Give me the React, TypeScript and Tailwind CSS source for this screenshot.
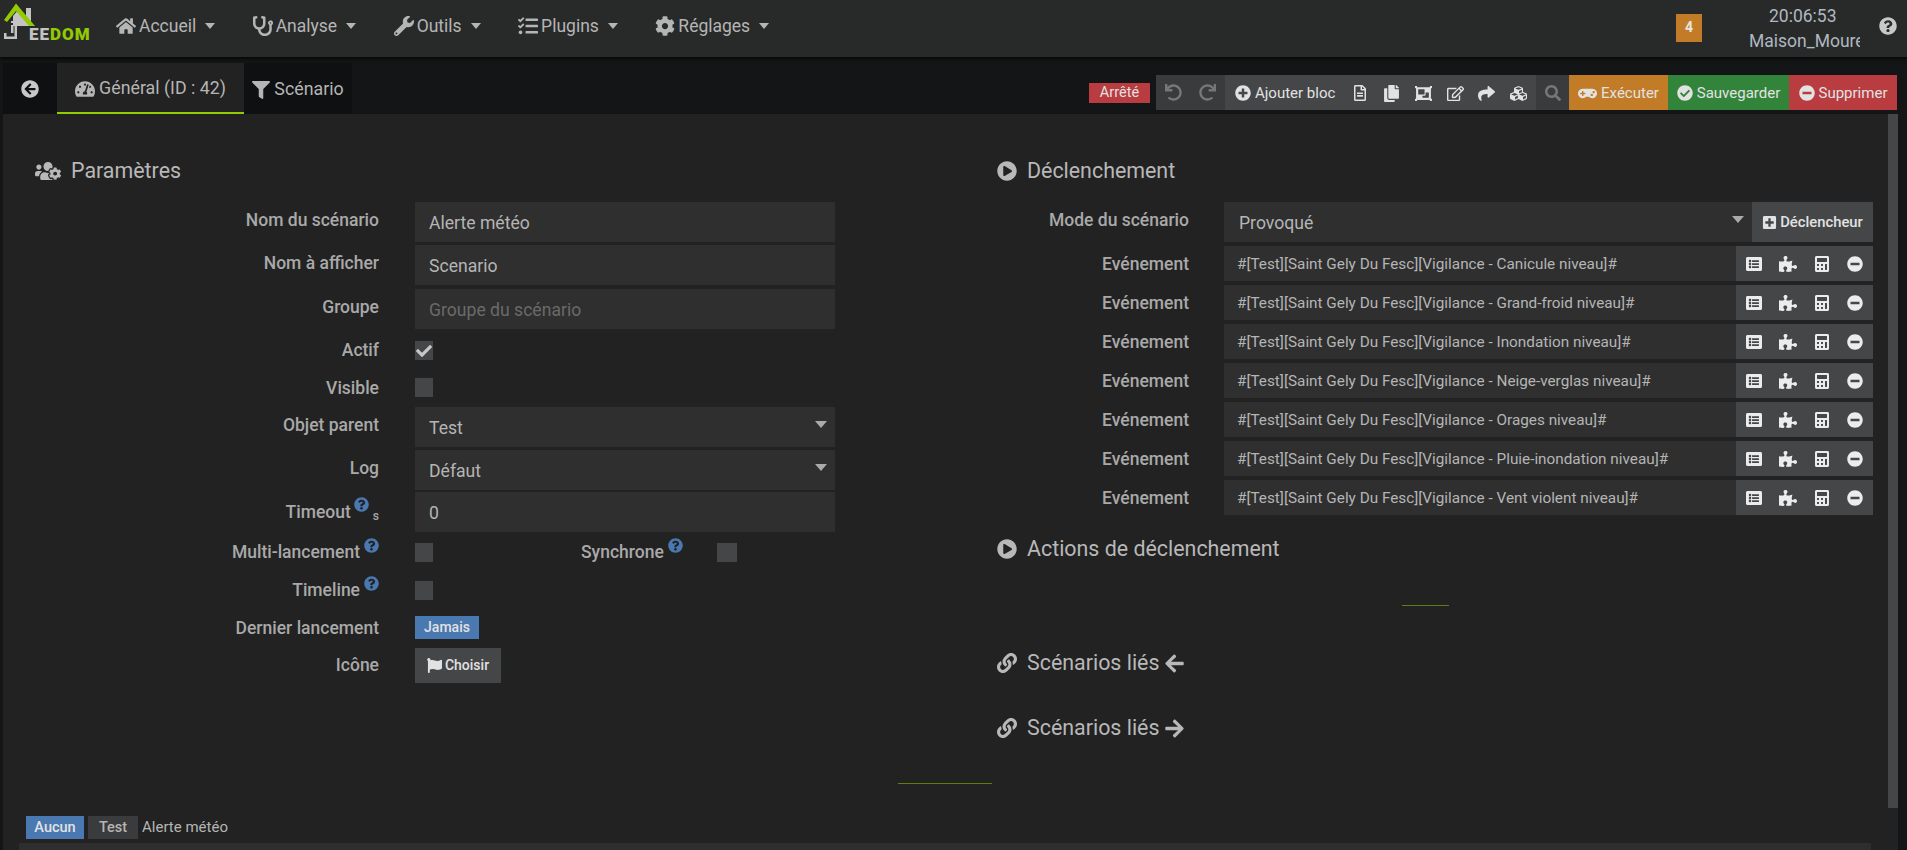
import {
  FaArrowCircleLeft, FaArrowLeft, FaArrowRight, FaCalculator, FaCheck, FaCheckCircle, FaCog, FaCubes, FaRegFileAlt,
  FaCopy, FaFilter, FaFlag, FaGamepad, FaHome, FaLink, FaListAlt, FaMinusCircle, FaObjectGroup, FaPlayCircle,
  FaPlusCircle, FaPlusSquare, FaPuzzlePiece, FaQuestionCircle, FaRedo, FaRegEdit, FaSearch, FaShare, FaStethoscope,
  FaTachometerAlt, FaTasks, FaUndo, FaUsersCog, FaWrench,
} from "react-icons/fa";

const navItems = [
  { label: "Accueil", icon: FaHome },
  { label: "Analyse", icon: FaStethoscope },
  { label: "Outils", icon: FaWrench },
  { label: "Plugins", icon: FaTasks },
  { label: "Réglages", icon: FaCog },
];

const events = [
  "#[Test][Saint Gely Du Fesc][Vigilance - Canicule niveau]#",
  "#[Test][Saint Gely Du Fesc][Vigilance - Grand-froid niveau]#",
  "#[Test][Saint Gely Du Fesc][Vigilance - Inondation niveau]#",
  "#[Test][Saint Gely Du Fesc][Vigilance - Neige-verglas niveau]#",
  "#[Test][Saint Gely Du Fesc][Vigilance - Orages niveau]#",
  "#[Test][Saint Gely Du Fesc][Vigilance - Pluie-inondation niveau]#",
  "#[Test][Saint Gely Du Fesc][Vigilance - Vent violent niveau]#",
];

function Logo() {
  return (
    <div className="relative h-[44px] w-[92px] shrink-0 self-start">
      <svg viewBox="0 0 40 42" className="absolute left-[-3px] top-0 h-[42px] w-[40px]">
        <path d="M13 16 L18 10 L26 16 L26 8 L31 8 L31 26 L13 26 Z" fill="#c4c4c4" />
        <path d="M4 20 L16 3.5 L35 26 L29 26 L16 11 L7 22 Z" fill="#93ca02" />
        <path d="M11 21 h2.5 v2 h-2.5 Z M11 25 h2.5 v8 h-2.5 Z" fill="#c4c4c4" />
        <path d="M14.5 26 h2.5 v13 h-13 v-6 h2.5 v3.5 h8 Z" fill="#c4c4c4" />
      </svg>
      <div className="absolute left-[26px] top-[24px] text-[17px] font-black leading-[20px] tracking-[1px]">
        <span className="text-[#c4c4c4]">EE</span>
        <span className="text-[#93ca02]">DOM</span>
      </div>
    </div>
  );
}

function Caret() {
  return <span className="ml-[9px] h-0 w-0 border-x-[5.5px] border-t-[6px] border-x-transparent border-t-[#b5b5b5]" />;
}

function Help({ className }: { className?: string }) {
  return <FaQuestionCircle className={`text-[15px] text-[#4a78b0] ${className ?? ""}`} />;
}

function Label({ children, up }: { children: React.ReactNode; up?: boolean }) {
  return (
    <div className={`flex w-[376px] shrink-0 items-center justify-end whitespace-nowrap text-[17.5px] font-medium text-[#a9a9a9] ${up ? "pb-[3px]" : ""}`}>
      {children}
    </div>
  );
}

function Field({ value, placeholder, select }: { value?: string; placeholder?: boolean; select?: boolean }) {
  return (
    <div className={`relative flex h-[40px] w-[420px] items-center bg-[#2f2f2f] pl-[14px] pt-[2px] text-[17.6px] ${placeholder ? "text-[#6a6a6a]" : "text-[#b5b5b5]"}`}>
      {value}
      {select && (
        <span className="absolute right-[8px] top-[14px] h-0 w-0 border-x-[6px] border-t-[7px] border-x-transparent border-t-[#aaaaaa]" />
      )}
    </div>
  );
}

function Check({ checked }: { checked?: boolean }) {
  return (
    <div className="flex h-[19px] w-[18px] items-center justify-center bg-[#454648] text-[16px] text-[#c8c8c8]">
      {checked && <FaCheck />}
    </div>
  );
}

function Heading({ icon: Icon, children }: { icon: React.ComponentType<{ className?: string }>; children: React.ReactNode }) {
  return (
    <div className="flex h-[30px] items-center text-[21.4px] text-[#b8b8b8]">
      <Icon className="mr-[10px] text-[20px]" />
      {children}
    </div>
  );
}

function Left() {
  return (
    <div className="w-[994px] shrink-0 pt-[42px]">
      <div className="pl-[32px]">
        <div className="flex h-[30px] items-center text-[21.4px] text-[#b8b8b8]">
          <FaUsersCog className="mr-[10px] text-[26px]" />
          Paramètres
        </div>
      </div>
      <div className="mt-[16px] flex gap-[36px]"><Label up>Nom du scénario</Label><Field value="Alerte météo" /></div>
      <div className="mt-[3px] flex gap-[36px]"><Label up>Nom à afficher</Label><Field value="Scenario" /></div>
      <div className="mt-[4px] flex gap-[36px]"><Label up>Groupe</Label><Field value="Groupe du scénario" placeholder /></div>
      <div className="mt-[12px] flex h-[19px] gap-[36px]"><Label>Actif</Label><Check checked /></div>
      <div className="mt-[18px] flex h-[19px] gap-[36px]"><div className="flex pt-[1px]"><Label>Visible</Label></div><Check /></div>
      <div className="mt-[10px] flex gap-[36px]"><Label up>Objet parent</Label><Field value="Test" select /></div>
      <div className="mt-[3px] flex gap-[36px]"><Label up>Log</Label><Field value="Défaut" select /></div>
      <div className="mt-[2px] flex gap-[36px]">
        <Label>
          Timeout
          <Help className="mb-[16px] ml-[3px]" />
          <span className="ml-[4px] mt-[8px] text-[12px]">s</span>
        </Label>
        <Field value="0" />
      </div>
      <div className="mt-[11px] flex h-[19px] gap-[36px]">
        <Label>
          Multi-lancement
          <Help className="mb-[14px] ml-[4px]" />
        </Label>
        <Check />
        <div className="ml-[112px] flex w-[102px] shrink-0 items-center whitespace-nowrap text-[17.5px] font-medium text-[#a9a9a9]">
          Synchrone
          <Help className="mb-[14px] ml-[4px] shrink-0" />
        </div>
        <div className="ml-[-2px] h-[19px] w-[20px] bg-[#454648]" />
      </div>
      <div className="mt-[19px] flex h-[19px] gap-[36px]">
        <Label>
          Timeline
          <Help className="mb-[14px] ml-[4px]" />
        </Label>
        <Check />
      </div>
      <div className="mt-[16px] flex h-[23px] gap-[36px]">
        <div className="flex pt-[1px]"><Label>Dernier lancement</Label></div>
        <div className="flex h-[23px] w-[64px] items-center justify-center bg-[#4a78b0] text-[14px] font-medium text-[#e2e2e2]">Jamais</div>
      </div>
      <div className="mt-[9px] flex gap-[36px]">
        <Label>Icône</Label>
        <div className="flex h-[35px] w-[86px] items-center justify-center gap-[3px] bg-[#454648] text-[14px] font-medium text-[#e2e2e2]">
          <FaFlag className="text-[15px]" />
          Choisir
        </div>
      </div>
    </div>
  );
}

function Right() {
  return (
    <div className="w-[876px] shrink-0 pt-[42px]">
      <Heading icon={FaPlayCircle}>Déclenchement</Heading>
      <div className="mt-[16px] flex h-[40px]">
        <div className="flex w-[192px] shrink-0 items-center justify-end whitespace-nowrap pb-[3px] text-[17.5px] font-medium text-[#a9a9a9]">Mode du scénario</div>
        <div className="relative ml-[35px] flex w-[528px] items-center bg-[#2f2f2f] pl-[15px] pt-[2px] text-[17.6px] text-[#b5b5b5]">
          Provoqué
          <span className="absolute right-[8px] top-[14px] h-0 w-0 border-x-[6px] border-t-[7px] border-x-transparent border-t-[#aaaaaa]" />
        </div>
        <div className="flex w-[121px] items-center justify-center gap-[3px] bg-[#454648] text-[14.8px] font-medium text-[#e2e2e2]">
          <FaPlusSquare className="text-[15px]" />
          Déclencheur
        </div>
      </div>
      <div className="mt-[4px] flex flex-col gap-[4px]">
        {events.map((ev) => (
          <div key={ev} className="flex h-[35px]">
            <div className="flex w-[192px] shrink-0 items-center justify-end pt-[1px] text-[17.5px] font-medium text-[#a9a9a9]">Evénement</div>
            <div className="ml-[35px] flex w-[512px] items-center bg-[#2f2f2f] pl-[13px] pt-[1px] text-[15.3px] text-[#b5b5b5]">{ev}</div>
            <div className="flex w-[137px] items-center justify-between bg-[#454648] px-[10px] text-[16px] text-[#ececec]">
              <FaListAlt />
              <FaPuzzlePiece className="text-[18px]" />
              <FaCalculator />
              <FaMinusCircle />
            </div>
          </div>
        ))}
      </div>
      <div className="mt-[19px]"><Heading icon={FaPlayCircle}>Actions de déclenchement</Heading></div>
      <div className="ml-[405px] mt-[41px] h-px w-[47px] bg-[#5f7d12]" />
      <div className="mt-[42px]">
        <Heading icon={FaLink}>
          Scénarios liés
          <FaArrowLeft className="ml-[5px] text-[21px]" />
        </Heading>
      </div>
      <div className="mt-[35px]">
        <Heading icon={FaLink}>
          Scénarios liés
          <FaArrowRight className="ml-[5px] text-[21px]" />
        </Heading>
      </div>
    </div>
  );
}

export default function App() {
  return (
    <div className="flex h-[850px] w-[1907px] flex-col overflow-hidden bg-[#141516] font-['Roboto',sans-serif]">
      <nav className="flex h-[57px] shrink-0 items-center bg-[#282a2a] pl-[3px] shadow-[0_1px_4px_#000]">
        <Logo />
        <div className="ml-[21px] flex gap-[37.5px] pb-[5px] text-[17.5px] text-[#b5b5b5]">
          {navItems.map(({ label, icon: Icon }) => (
            <div key={label} className="flex items-center">
              <Icon className="mr-[3px] text-[20px]" />
              {label}
              <Caret />
            </div>
          ))}
        </div>
        <div className="mb-[2px] ml-auto flex h-[28px] w-[26px] items-center justify-center bg-[#c27c27] text-[14px] font-bold text-[#e6e6e6]">4</div>
        <div className="ml-[47px] mr-[-1px] flex w-[112px] flex-col items-start text-[17.5px] leading-[25px] text-[#b0b8c0]">
          <div className="ml-[20px]">20:06:53</div>
          <div className="w-[111px] overflow-hidden whitespace-nowrap">Maison_Moure</div>
        </div>
        <FaQuestionCircle className="mb-[6px] ml-[19px] mr-[10px] text-[18px] text-[#c8c8c8]" />
      </nav>

      <div className="mt-[6px] flex h-[51px] shrink-0 pl-[3px] text-[17.8px] text-[#b5b5b5]">
        <div className="flex w-[54px] items-center justify-center bg-[#0f1012] text-[18px] text-[#c8c8c8]"><FaArrowCircleLeft /></div>
        <div className="flex w-[187px] items-center justify-center gap-[4px] border-b-2 border-[#93ca02] bg-[#222222] pt-[2px]">
          <FaTachometerAlt className="text-[20px]" />
          Général (ID : 42)
        </div>
        <div className="flex w-[108px] items-center justify-center gap-[4px] bg-[#0f1012] pt-[2px]">
          <FaFilter className="text-[18px]" />
          Scénario
        </div>
        <div className="ml-auto mr-[10px] mt-[12px] flex h-[35px] items-center text-[15px] text-[#e2e2e2]">
          <div className="mr-[6px] flex h-[20px] w-[61px] items-center justify-center bg-[#b83c40] text-[14.5px]">Arrêté</div>
          <div className="flex h-full w-[69px] items-center justify-center gap-[17px] bg-[#3a3b3d] text-[17px] text-[#777777]">
            <FaUndo />
            <FaRedo />
          </div>
          <div className="flex h-full w-[311px] items-center bg-[#454648] pl-[10px] pr-[9px] pt-[1px]">
            <FaPlusCircle className="mr-[4px] text-[16px]" />
            <span className="mr-[17px]">Ajouter bloc</span>
            <div className="flex flex-1 items-center justify-between text-[17px]">
              <FaRegFileAlt className="text-[16px]" />
              <FaCopy />
              <FaObjectGroup />
              <FaRegEdit />
              <FaShare />
              <FaCubes />
            </div>
          </div>
          <div className="flex h-full w-[33px] items-center justify-center bg-[#3a3b3d] text-[16px] text-[#777777]"><FaSearch /></div>
          <div className="flex h-full w-[99px] items-center justify-center gap-[4px] bg-[#c27c27] pt-[1px]"><FaGamepad className="text-[19px]" />Exécuter</div>
          <div className="flex h-full w-[121px] items-center justify-center gap-[4px] bg-[#33843b] pt-[1px]"><FaCheckCircle className="text-[16px]" />Sauvegarder</div>
          <div className="flex h-full w-[108px] items-center justify-center gap-[4px] bg-[#b83c40] pt-[1px]"><FaMinusCircle className="text-[16px]" />Supprimer</div>
        </div>
      </div>

      <div className="ml-[3px] flex h-[736px] w-[1895px] shrink-0 bg-[#222222]">
        <div className="flex min-w-0 flex-1 flex-col">
          <div className="flex h-[670px] shrink-0">
            <Left />
            <Right />
          </div>
          <div className="relative h-0">
            <div className="absolute bottom-[0px] left-[895px] h-px w-[94px] bg-[#5f7d12]" />
          </div>
          <div className="ml-[23px] mt-[32px] flex h-[23px] items-center gap-[4px] text-[14.5px] font-medium text-[#b5b5b5]">
            <div className="flex h-full w-[58px] items-center justify-center bg-[#4a78b0] text-[#e2e2e2]">Aucun</div>
            <div className="flex h-full w-[50px] items-center justify-center bg-[#3a3b3d]">Test</div>
            <div className="text-[15px] font-normal">Alerte météo</div>
          </div>
          <div className="ml-[16px] mt-[4px] h-[7px] w-[1852px] bg-[#2e2e2e]" />
        </div>
        <div className="w-[10px] shrink-0"><div className="h-[694px] bg-[#454648]" /></div>
      </div>
    </div>
  );
}
